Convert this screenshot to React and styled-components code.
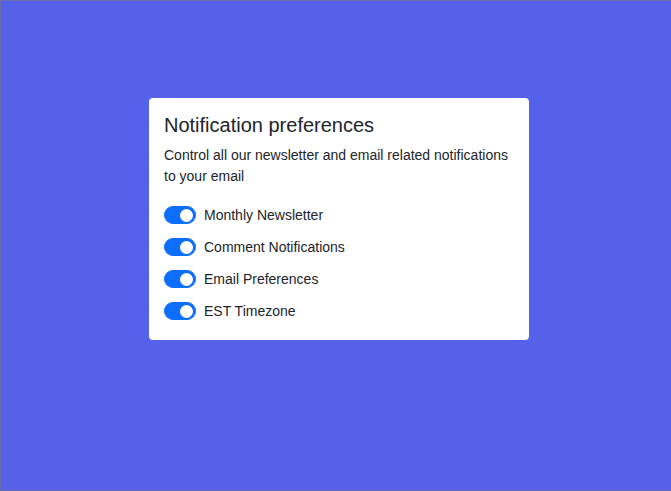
import React, { useState } from "react";
import styled, { createGlobalStyle } from "styled-components";

const Global = createGlobalStyle`
  * { box-sizing: border-box; }
  html, body { margin: 0; padding: 0; }
  body { font-family: "Liberation Sans", Arial, sans-serif; }
`;

const Page = styled.div`
  width: 671px;
  height: 491px;
  background: #5461e8;
  border: 1px solid #6a6fa8;
  border-right: none;
  display: flex;
  justify-content: center;
  align-items: flex-start;
  padding-top: 97px;
  padding-right: 12px;
  padding-left: 18px;
`;

const Card = styled.div`
  width: 380px;
  background: #fff;
  border-radius: 4px;
  padding: 15px 15px 17px 15px;
  color: #212529;
`;

const Title = styled.h1`
  margin: 0 0 8px;
  font-size: 20px;
  font-weight: 400;
  line-height: 24px;
`;

const Desc = styled.p`
  margin: 0 0 16px;
  font-size: 14px;
  line-height: 21px;
`;

const List = styled.div`
  display: flex;
  flex-direction: column;
  gap: 8px;
`;

const Row = styled.label`
  display: flex;
  align-items: center;
  gap: 8px;
  height: 24px;
  font-size: 14px;
  cursor: pointer;
`;

const Track = styled.span`
  position: relative;
  width: 32px;
  height: 18px;
  border-radius: 9px;
  background: ${(p) => (p.$on ? "#0d6efd" : "#fff")};
  border: 1px solid ${(p) => (p.$on ? "#0d6efd" : "#ced4da")};
  flex-shrink: 0;
`;

const Knob = styled.span`
  position: absolute;
  top: 1.5px;
  left: ${(p) => (p.$on ? "15px" : "2px")};
  width: 13px;
  height: 13px;
  border-radius: 50%;
  background: ${(p) => (p.$on ? "#fff" : "#ced4da")};
`;

const items = [
  "Monthly Newsletter",
  "Comment Notifications",
  "Email Preferences",
  "EST Timezone",
];

export default function App() {
  const [state, setState] = useState(items.map(() => true));
  return (
    <>
      <Global />
      <Page>
        <Card>
          <Title>Notification preferences</Title>
          <Desc>
            Control all our newsletter and email related notifications to
            your email
          </Desc>
          <List>
            {items.map((t, i) => (
              <Row
                key={t}
                onClick={() =>
                  setState((s) => s.map((v, j) => (j === i ? !v : v)))
                }
              >
                <Track $on={state[i]}>
                  <Knob $on={state[i]} />
                </Track>
                {t}
              </Row>
            ))}
          </List>
        </Card>
      </Page>
    </>
  );
}
